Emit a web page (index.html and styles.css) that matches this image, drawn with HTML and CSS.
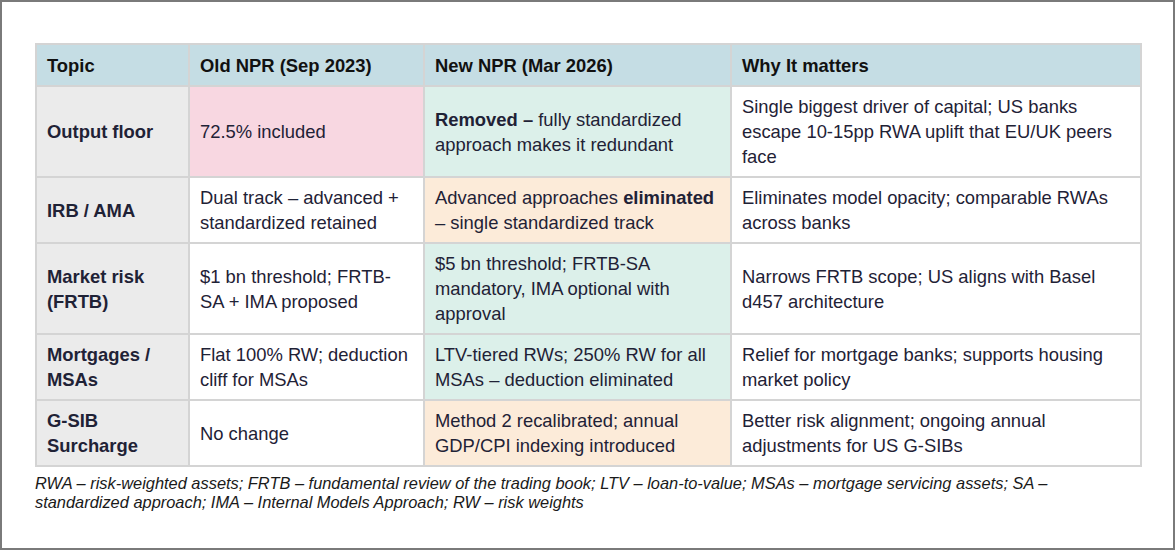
FILE: index.html
```html
<!DOCTYPE html>
<html>
<head>
<meta charset="utf-8">
<link rel="stylesheet" href="styles.css">
</head>
<body>
<div class="frame">
  <table class="npr">
    <colgroup>
      <col class="c1"><col class="c2"><col class="c3"><col class="c4">
    </colgroup>
    <thead>
      <tr><th>Topic</th><th>Old NPR (Sep 2023)</th><th>New NPR (Mar 2026)</th><th>Why It matters</th></tr>
    </thead>
    <tbody>
      <tr>
        <td class="topic">Output floor</td>
        <td class="pink">72.5% included</td>
        <td class="mint"><b>Removed –</b> fully standardized approach makes it redundant</td>
        <td>Single biggest driver of capital; US banks escape 10-15pp RWA uplift that EU/UK peers face</td>
      </tr>
      <tr>
        <td class="topic">IRB / AMA</td>
        <td>Dual track – advanced + standardized retained</td>
        <td class="peach">Advanced approaches <b>eliminated</b> – single standardized track</td>
        <td>Eliminates model opacity; comparable RWAs across banks</td>
      </tr>
      <tr>
        <td class="topic">Market risk (FRTB)</td>
        <td>$1 bn threshold; FRTB-SA + IMA proposed</td>
        <td class="mint">$5 bn threshold; FRTB-SA mandatory, IMA optional with approval</td>
        <td>Narrows FRTB scope; US aligns with Basel d457 architecture</td>
      </tr>
      <tr>
        <td class="topic">Mortgages / MSAs</td>
        <td>Flat 100% RW; deduction cliff for MSAs</td>
        <td class="mint">LTV-tiered RWs; 250% RW for all MSAs – deduction eliminated</td>
        <td>Relief for mortgage banks; supports housing market policy</td>
      </tr>
      <tr>
        <td class="topic">G-SIB Surcharge</td>
        <td>No change</td>
        <td class="peach">Method 2 recalibrated; annual GDP/CPI indexing introduced</td>
        <td>Better risk alignment; ongoing annual adjustments for US G-SIBs</td>
      </tr>
    </tbody>
  </table>
  <p class="note">RWA – risk-weighted assets; FRTB – fundamental review of the trading book; LTV – loan-to-value; MSAs – mortgage servicing assets; SA – standardized approach; IMA – Internal Models Approach; RW – risk weights</p>
</div>
</body>
</html>
```
FILE: styles.css
```css
html, body {
  margin: 0;
  padding: 0;
  background: #ffffff;
}
.frame {
  box-sizing: border-box;
  width: 1175px;
  height: 550px;
  border: 2px solid #7a7a7a;
  padding: 41px 33px 0 33px;
  font-family: "Liberation Sans", Arial, sans-serif;
}
.npr {
  border-collapse: collapse;
  table-layout: fixed;
  width: 1107px;
  font-size: 18.4px;
  line-height: 25px;
  color: #1f2236;
}
.c1 { width: 153px; }
.c2 { width: 235px; }
.c3 { width: 307px; }
.c4 { width: 410px; }
.npr th, .npr td {
  border: 2px solid #d4d4d4;
  padding: 7px 10px 7px 10px;
  vertical-align: middle;
  text-align: left;
}
.npr th {
  background: #c5dde4;
  color: #111111;
  font-weight: bold;
  padding-top: 8px;
  padding-bottom: 7px;
}
.npr td.topic {
  background: #ebebeb;
  font-weight: bold;
}
.npr td.pink { background: #f8d7e1; }
.npr td.mint { background: #dcf0ea; }
.npr td.peach { background: #fcebd9; }
.npr b { font-weight: bold; }
.note {
  margin: 7px 0 0 0;
  font-size: 16.4px;
  line-height: 19px;
  font-style: italic;
  color: #1a1a1a;
  width: 1070px;
}
```
